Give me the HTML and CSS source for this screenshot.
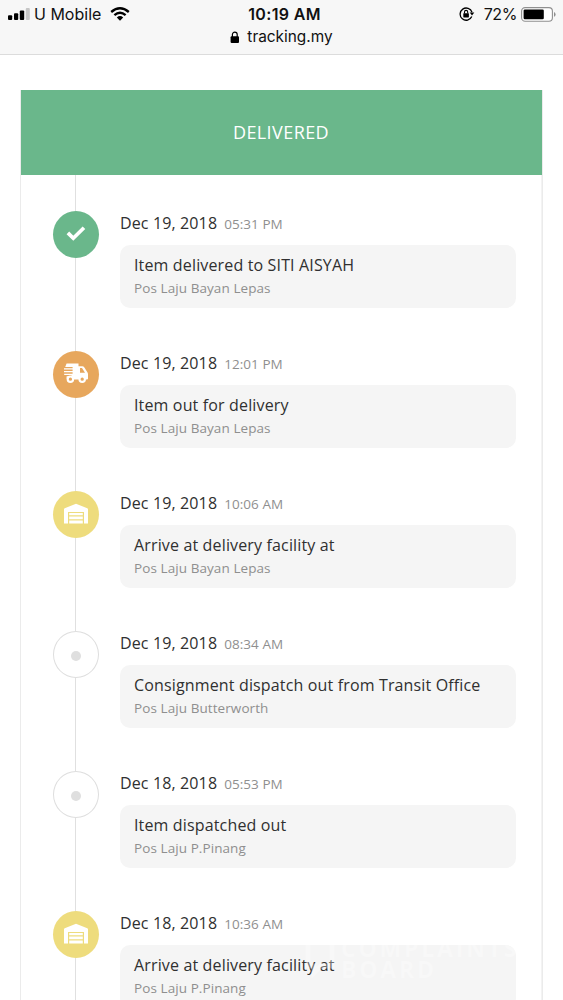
FILE: index.html
```html
<!DOCTYPE html>
<html lang="en">
<head>
<meta charset="utf-8">
<title>tracking.my</title>
<link rel="stylesheet" href="styles.css">
</head>
<body>
<svg class="defs" width="0" height="0">
  <symbol id="check" viewBox="0 0 26 26"><path d="M3.4 12.8l6.4 6.4L22.4 6.8" fill="none" stroke="#fff" stroke-width="4.4"/></symbol>
  <symbol id="truck" viewBox="0 0 26 26">
    <path fill="#fff" d="M3.6 2.5H15.5V5.2H19.3Q20.6 5.2 21.4 6.4L24.2 11Q25 12 25 13.3V17.6Q25 18.6 24 18.6H5Q3.6 18.6 3.6 17.3V15.2H8.5V14H1.2V12.7H9.6V11.3H1V10H9.6V8.6H1V7.3H9.6V6.1H2.2Z"/>
    <path fill="#e7a75d" d="M17 7h2l3 4.7h-5z"/>
    <g fill="#e7a75d" stroke="#fff" stroke-width="2.1"><circle cx="7.4" cy="18.2" r="2.7"/><circle cx="19.2" cy="18.2" r="2.7"/></g>
  </symbol>
  <symbol id="warehouse" viewBox="0 0 26 26">
    <path fill="#fff" d="M1 22.5V8.2Q1 7.5 1.7 7.2L12.4 2.9Q13 2.7 13.6 2.9L24.3 7.2Q25 7.5 25 8.2V22.5H21V11H5V22.5ZM6.2 12H19.8V14.2H6.2ZM6.2 15.4H19.8V18.3H6.2ZM6.2 19.5H19.8V22.5H6.2Z"/>
  </symbol>
</svg>
<header class="browser">
  <div class="status">
    <div class="carrier">
      <svg width="23" height="13" viewBox="0 0 23 13"><rect x="0" y="7.2" width="4.2" height="4.8" rx="1"/><rect x="6" y="5.2" width="4.2" height="6.8" rx="1"/><rect x="11.8" y="2.6" width="4.4" height="9.4" rx="1"/><rect x="17.8" y="0" width="4" height="12" rx="1" fill="#c6c6c6"/></svg>
      <span class="carrier-name">U Mobile</span>
      <svg class="wifi" width="20" height="14" viewBox="0 0 20 14"><g fill="none" stroke="#000" stroke-width="2.4"><path d="M1.2 5Q10-2.4 18.8 5"/><path d="M4.4 8.2Q10 3.4 15.6 8.2"/></g><path d="M6.8 10.4Q10 7.8 13.2 10.4L10 13.7Z"/></svg>
    </div>
    <div class="clock">10:19 AM</div>
    <div class="power">
      <svg width="16" height="14" viewBox="0 0 16 14"><path d="M12.8 9.6A6.1 6.1 0 1 1 13 5.2" fill="none" stroke="#000" stroke-width="1.3"/><path d="M10.7 5.4h4.6L13 8.5z"/><rect x="4.3" y="6.2" width="5.6" height="4.2" rx=".6"/><path d="M5.5 6.4V5a1.6 1.6 0 0 1 3.2 0v1.4" fill="none" stroke="#000" stroke-width="1.1"/></svg>
      <span class="percent">72%</span>
      <svg width="35" height="15" viewBox="0 0 35 15"><rect x=".6" y=".6" width="30.8" height="13.6" rx="3.5" fill="#fff" stroke="#8f8f8f" stroke-width="1.1"/><rect x="2.6" y="2.5" width="20.2" height="9.8" rx="1.3"/><path d="M33 5v4.7q1.6-.7 1.6-2.3T33 5z" fill="#8f8f8f"/></svg>
    </div>
  </div>
  <div class="address">
    <svg width="10" height="13" viewBox="0 0 10 13"><rect x=".6" y="5.3" width="8.4" height="6.7" rx="1"/><path d="M2.4 6V3.6a2.4 2.5 0 0 1 4.8 0V6" fill="none" stroke="#000" stroke-width="1.2"/></svg>
    <span>tracking.my</span>
  </div>
</header>
<main class="tracking">
  <h1 class="banner"><span>DELIVERED</span></h1>
  <ol class="timeline">
    <li class="event">
      <div class="rail"><div class="marker green"><svg><use href="#check"/></svg></div></div>
      <div class="detail"><div class="when"><span class="date">Dec 19, 2018</span><span class="time">05:31 PM</span></div>
      <div class="box"><div class="title">Item delivered to SITI AISYAH</div><div class="place">Pos Laju Bayan Lepas</div></div></div>
    </li>
    <li class="event">
      <div class="rail"><div class="marker orange"><svg><use href="#truck"/></svg></div></div>
      <div class="detail"><div class="when"><span class="date">Dec 19, 2018</span><span class="time">12:01 PM</span></div>
      <div class="box"><div class="title">Item out for delivery</div><div class="place">Pos Laju Bayan Lepas</div></div></div>
    </li>
    <li class="event">
      <div class="rail"><div class="marker yellow"><svg><use href="#warehouse"/></svg></div></div>
      <div class="detail"><div class="when"><span class="date">Dec 19, 2018</span><span class="time">10:06 AM</span></div>
      <div class="box"><div class="title">Arrive at delivery facility at</div><div class="place">Pos Laju Bayan Lepas</div></div></div>
    </li>
    <li class="event">
      <div class="rail"><div class="marker plain"><i class="dot"></i></div></div>
      <div class="detail"><div class="when"><span class="date">Dec 19, 2018</span><span class="time">08:34 AM</span></div>
      <div class="box"><div class="title">Consignment dispatch out from Transit Office</div><div class="place">Pos Laju Butterworth</div></div></div>
    </li>
    <li class="event">
      <div class="rail"><div class="marker plain"><i class="dot"></i></div></div>
      <div class="detail"><div class="when"><span class="date">Dec 18, 2018</span><span class="time">05:53 PM</span></div>
      <div class="box"><div class="title">Item dispatched out</div><div class="place">Pos Laju P.Pinang</div></div></div>
    </li>
    <li class="event">
      <div class="rail"><div class="marker yellow"><svg><use href="#warehouse"/></svg></div></div>
      <div class="detail"><div class="when"><span class="date">Dec 18, 2018</span><span class="time">10:36 AM</span></div>
      <div class="box"><div class="title">Arrive at delivery facility at</div><div class="place">Pos Laju P.Pinang</div></div></div>
    </li>
  </ol>
</main>
<div class="watermark">
  <svg width="34" height="40" viewBox="0 0 34 40"><path d="M4 3h24v25H17l-7 7v-7H4z" fill="none" stroke="#fff" stroke-width="5"/></svg>
  <div class="watermark-name"><div>COMPLAINTS</div><div>BOARD</div></div>
</div>
</body>
</html>
```
FILE: styles.css
```css
* { box-sizing: border-box; }
html, body { height: 1000px; overflow: hidden; }
body { margin: 0; position: relative; background: #fff; color: #303030; font-family: "Open Sans", sans-serif; }
svg { display: block; flex: none; }
.defs { position: absolute; }
.browser { height: 55px; background: #f7f7f7; border-bottom: 1px solid #dcdcdc; color: #111; font-family: Inter, sans-serif; }
.status { height: 28px; display: grid; grid-template-columns: 1fr auto 1fr; align-items: center; padding: 0 7px 0 8px; font-size: 16px; line-height: 28px; white-space: nowrap; }
.carrier, .power { display: flex; align-items: center; }
.carrier-name { margin-left: 3px; width: 68px; letter-spacing: 0; }
.wifi { margin-left: 8px; }
.clock { font-weight: 600; letter-spacing: .35px; padding-left: 5px; }
.power { justify-content: flex-end; }
.power > svg:first-child { margin-right: 1px; }
.percent { margin: 0 4px 0 8px; letter-spacing: -.4px; }
.address { display: flex; justify-content: center; align-items: center; gap: 7px; height: 18px; font-size: 15.4px; line-height: 18px; }
.tracking { margin: 35px 20px 0; height: 910px; overflow: hidden; border: 1px solid #ebebeb; border-width: 0 1px 0 1.5px; box-shadow: inset -1px 0 #f3f3f3; }
.banner { margin: 0; height: 85px; display: flex; align-items: center; justify-content: center; padding: 0 1px 2px 0; background: #6ab78b; color: #fff; font-size: 18px; font-weight: 400; letter-spacing: .42px; }
.timeline { list-style: none; margin: 0; padding: 0 26px 0 32px; }
.event { height: 140px; display: flex; gap: 21px; }
.rail { width: 46px; flex: none; padding-top: 36px; background: linear-gradient(#e0e0e0, #e0e0e0) 22px 0 / 1px 100% no-repeat; }
.marker { width: 46px; height: 47px; border-radius: 50%; display: flex; align-items: center; justify-content: center; }
.marker svg { width: 26px; height: 26px; margin-bottom: 1px; }
.green { background: #6ab78b; }
.green svg { width: 22px; height: 22px; margin-bottom: 3px; }
.orange { background: #e7a75d; }
.yellow { background: #eedc7d; }
.plain { background: #fff; border: 1px solid #dedede; }
.dot { width: 10px; height: 10px; margin-top: 2px; border-radius: 50%; background: #dfdfdf; }
.detail { flex: 1; padding-top: 36px; }
.when { height: 34px; line-height: 25px; display: flex; align-items: baseline; gap: 7px; white-space: nowrap; }
.date { font-size: 16px; letter-spacing: .13px; }
.time { font-size: 13.5px; letter-spacing: .05px; color: #8f8f8f; }
.box { height: 63px; padding: 9px 14px; border-radius: 10px; background: #f5f5f5; white-space: nowrap; }
.title { font-size: 16px; line-height: 23px; letter-spacing: .15px; }
.place { font-size: 13.5px; line-height: 22px; letter-spacing: .08px; color: #8f8f8f; }
.watermark { position: absolute; left: 304px; top: 938px; display: flex; gap: 3px; opacity: .3; }
.watermark-name { color: #fff; font: 700 23px/21px "Open Sans", sans-serif; letter-spacing: 2.8px; }
```
